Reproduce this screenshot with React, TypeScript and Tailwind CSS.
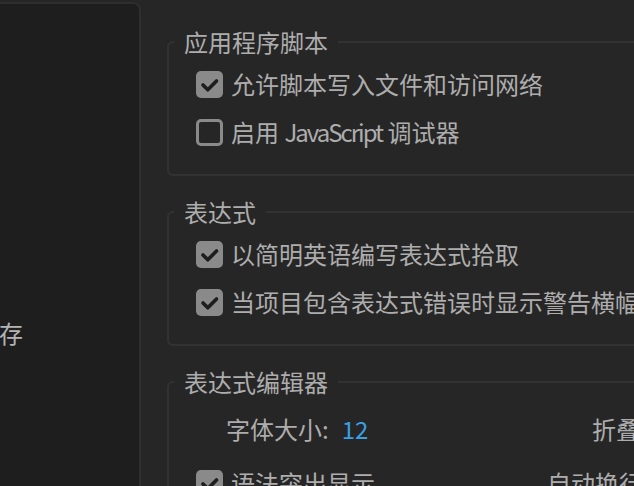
const font = { fontFamily: '"Noto Sans CJK SC", "Noto Sans", sans-serif' };

function Check({ on }: { on: boolean }) {
  if (!on) {
    return <div className="w-[27px] h-[27px] shrink-0 rounded-[5px] border-[3px] border-[#8a8a8a]" />;
  }
  return (
    <div className="w-[27px] h-[27px] shrink-0 rounded-[5px] bg-[#8a8a8a]">
      <svg width="27" height="27" viewBox="0 0 27 27">
        <path d="M7 14 L11.8 18.8 L20.5 10" fill="none" stroke="#1d1d1d" strokeWidth="3.6" strokeLinecap="round" strokeLinejoin="round" />
      </svg>
    </div>
  );
}

function Row({ on, children }: { on: boolean; children: React.ReactNode }) {
  return (
    <div className="h-[48px] pl-[27px] flex items-center gap-[8px]">
      <Check on={on} />
      <span className="whitespace-nowrap">{children}</span>
    </div>
  );
}

function Group({ title, children }: { title: string; children: React.ReactNode }) {
  return (
    <fieldset className="w-[520px] shrink-0 border-2 border-[#323232] rounded-[6px] pb-[18px]">
      <legend className="ml-[5px] pl-[10px] pr-[10px] leading-[28px]">{title}</legend>
      <div className="mt-[4px]">{children}</div>
    </fieldset>
  );
}

export default function App() {
  return (
    <div
      className="w-[634px] h-[486px] overflow-hidden bg-[#262626] flex text-[24px] text-[#adadad]"
      style={font}
    >
      {/* sidebar, mostly cut off on the left */}
      <div className="w-[141px] shrink-0 mt-[2px] bg-[#1e1e1e] border-t-2 border-r-2 border-[#2e2e2e] rounded-tr-[8px] overflow-hidden">
        <div className="pt-[312px] ml-[-145px] leading-[34px] whitespace-nowrap text-[#b4b4b4]">媒体和磁盘缓存</div>
      </div>

      <div className="flex-1 overflow-hidden pl-[26px] pt-[28px] flex flex-col gap-[22px]">
        <Group title="应用程序脚本">
          <Row on>允许脚本写入文件和访问网络</Row>
          <Row on={false}>
            启用 <span className="tracking-[-2px]">JavaScript</span> 调试器
          </Row>
        </Group>

        <Group title="表达式">
          <Row on>以简明英语编写表达式拾取</Row>
          <Row on>当项目包含表达式错误时显示警告横幅</Row>
        </Group>

        <fieldset className="w-[520px] border-2 border-[#323232] rounded-[6px] pb-[18px] shrink-0">
          <legend className="ml-[5px] pl-[10px] pr-[10px] leading-[28px]">表达式编辑器</legend>
          <div className="mt-[3px] h-[60px] flex items-center whitespace-nowrap">
            <div className="w-[423px] pl-[57px] flex items-center gap-[13px]">
              <span>字体大小:</span>
              <span className="text-[#3a9fe3]">12</span>
            </div>
            <span>折叠代码</span>
          </div>
          <div className="h-[48px] flex items-center whitespace-nowrap">
            <div className="w-[378px] pl-[27px] flex items-center gap-[8px]">
              <Check on />
              <span>语法突出显示</span>
            </div>
            <span>自动换行</span>
          </div>
        </fieldset>
      </div>
    </div>
  );
}
